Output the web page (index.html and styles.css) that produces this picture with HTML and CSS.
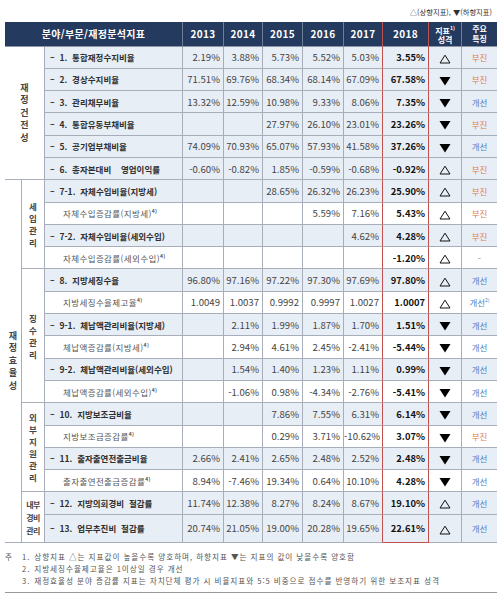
FILE: index.html
```html
<!DOCTYPE html>
<html lang="ko">
<head>
<meta charset="utf-8">
<title>재정분석지표</title>
<link rel="stylesheet" href="styles.css">
</head>
<body>
<div class="page">
  <div class="legend">△(상향지표), ▼(하향지표)</div>
  <table class="fin">
    <colgroup>
      <col class="w-cat1"><col class="w-cat2"><col class="w-label">
      <col class="w-41"><col class="w-39"><col class="w-40"><col class="w-41"><col class="w-39">
      <col class="w-46"><col class="w-33"><col class="w-35">
    </colgroup>
    <thead>
      <tr>
        <th colspan="3">분야/부문/재정분석지표</th>
        <th>2013</th><th>2014</th><th>2015</th><th>2016</th><th class="pre18">2017</th>
        <th class="y18">2018</th>
        <th class="sm">지표<sup>1)</sup><br>성격</th>
        <th class="sm last">주요<br>특징</th>
      </tr>
    </thead>
    <tbody>
      <tr class="main">
        <td class="cat sec" colspan="2" rowspan="6">재<br>정<br>건<br>전<br>성</td>
        <td class="lbl">– 1. 통합재정수지비율</td>
        <td>2.19%</td><td>3.88%</td><td>5.73%</td><td>5.52%</td><td class="pre18">5.03%</td><td class="y18">3.55%</td>
        <td class="ind"><svg class="tri" viewBox="0 0 12 10"><path d="M6 1.2L11 9H1z" fill="none" stroke="#111" stroke-width="1"/></svg></td><td class="st bad">부진</td>
      </tr>
      <tr class="main">
        <td class="lbl">– 2. 경상수지비율</td>
        <td>71.51%</td><td>69.76%</td><td>68.34%</td><td>68.14%</td><td class="pre18">67.09%</td><td class="y18">67.58%</td>
        <td class="ind"><svg class="tri" viewBox="0 0 12 10"><path d="M0.5 1h11L6 9.5z" fill="#000"/></svg></td><td class="st bad">부진</td>
      </tr>
      <tr class="main">
        <td class="lbl">– 3. 관리채무비율</td>
        <td>13.32%</td><td>12.59%</td><td>10.98%</td><td>9.33%</td><td class="pre18">8.06%</td><td class="y18">7.35%</td>
        <td class="ind"><svg class="tri" viewBox="0 0 12 10"><path d="M0.5 1h11L6 9.5z" fill="#000"/></svg></td><td class="st good">개선</td>
      </tr>
      <tr class="main">
        <td class="lbl">– 4. 통합유동부채비율</td>
        <td></td><td></td><td>27.97%</td><td>26.10%</td><td class="pre18">23.01%</td><td class="y18">23.26%</td>
        <td class="ind"><svg class="tri" viewBox="0 0 12 10"><path d="M0.5 1h11L6 9.5z" fill="#000"/></svg></td><td class="st bad">부진</td>
      </tr>
      <tr class="main">
        <td class="lbl">– 5. 공기업부채비율</td>
        <td>74.09%</td><td>70.93%</td><td>65.07%</td><td>57.93%</td><td class="pre18">41.58%</td><td class="y18">37.26%</td>
        <td class="ind"><svg class="tri" viewBox="0 0 12 10"><path d="M0.5 1h11L6 9.5z" fill="#000"/></svg></td><td class="st good">개선</td>
      </tr>
      <tr class="main sec">
        <td class="lbl">– 6. 총자본대비 &nbsp;영업이익률</td>
        <td>-0.60%</td><td>-0.82%</td><td>1.85%</td><td>-0.59%</td><td class="pre18">-0.68%</td><td class="y18">-0.92%</td>
        <td class="ind"><svg class="tri" viewBox="0 0 12 10"><path d="M6 1.2L11 9H1z" fill="none" stroke="#111" stroke-width="1"/></svg></td><td class="st bad">부진</td>
      </tr>

      <tr class="main">
        <td class="cat outer" rowspan="16">재<br>정<br>효<br>율<br>성</td>
        <td class="cat sub" rowspan="4">세<br>입<br>관<br>리</td>
        <td class="lbl">– 7-1. 자체수입비율(지방세)</td>
        <td></td><td></td><td>28.65%</td><td>26.32%</td><td class="pre18">26.23%</td><td class="y18">25.90%</td>
        <td class="ind"><svg class="tri" viewBox="0 0 12 10"><path d="M6 1.2L11 9H1z" fill="none" stroke="#111" stroke-width="1"/></svg></td><td class="st bad">부진</td>
      </tr>
      <tr>
        <td class="lbl subl">자체수입증감률(지방세)<sup>4)</sup></td>
        <td></td><td></td><td></td><td>5.59%</td><td class="pre18">7.16%</td><td class="y18">5.43%</td>
        <td class="ind"><svg class="tri" viewBox="0 0 12 10"><path d="M6 1.2L11 9H1z" fill="none" stroke="#111" stroke-width="1"/></svg></td><td class="st bad">부진</td>
      </tr>
      <tr class="main">
        <td class="lbl">– 7-2. 자체수입비율(세외수입)</td>
        <td></td><td></td><td></td><td></td><td class="pre18">4.62%</td><td class="y18">4.28%</td>
        <td class="ind"><svg class="tri" viewBox="0 0 12 10"><path d="M6 1.2L11 9H1z" fill="none" stroke="#111" stroke-width="1"/></svg></td><td class="st bad">부진</td>
      </tr>
      <tr>
        <td class="lbl subl">자체수입증감률(세외수입)<sup>4)</sup></td>
        <td></td><td></td><td></td><td></td><td class="pre18"></td><td class="y18">-1.20%</td>
        <td class="ind"><svg class="tri" viewBox="0 0 12 10"><path d="M6 1.2L11 9H1z" fill="none" stroke="#111" stroke-width="1"/></svg></td><td class="st dash">-</td>
      </tr>

      <tr class="main">
        <td class="cat sub" rowspan="6">징<br>수<br>관<br>리</td>
        <td class="lbl">– 8. 지방세징수율</td>
        <td>96.80%</td><td>97.16%</td><td>97.22%</td><td>97.30%</td><td class="pre18">97.69%</td><td class="y18">97.80%</td>
        <td class="ind"><svg class="tri" viewBox="0 0 12 10"><path d="M6 1.2L11 9H1z" fill="none" stroke="#111" stroke-width="1"/></svg></td><td class="st good">개선</td>
      </tr>
      <tr>
        <td class="lbl subl">지방세징수율제고율<sup>4)</sup></td>
        <td>1.0049</td><td>1.0037</td><td>0.9992</td><td>0.9997</td><td class="pre18">1.0027</td><td class="y18">1.0007</td>
        <td class="ind"><svg class="tri" viewBox="0 0 12 10"><path d="M6 1.2L11 9H1z" fill="none" stroke="#111" stroke-width="1"/></svg></td><td class="st good">개선<sup>2)</sup></td>
      </tr>
      <tr class="main">
        <td class="lbl">– 9-1. 체납액관리비율(지방세)</td>
        <td></td><td>2.11%</td><td>1.99%</td><td>1.87%</td><td class="pre18">1.70%</td><td class="y18">1.51%</td>
        <td class="ind"><svg class="tri" viewBox="0 0 12 10"><path d="M0.5 1h11L6 9.5z" fill="#000"/></svg></td><td class="st good">개선</td>
      </tr>
      <tr>
        <td class="lbl subl">체납액증감률(지방세)<sup>4)</sup></td>
        <td></td><td>2.94%</td><td>4.61%</td><td>2.45%</td><td class="pre18">-2.41%</td><td class="y18">-5.44%</td>
        <td class="ind"><svg class="tri" viewBox="0 0 12 10"><path d="M0.5 1h11L6 9.5z" fill="#000"/></svg></td><td class="st good">개선</td>
      </tr>
      <tr class="main">
        <td class="lbl">– 9-2. 체납액관리비율(세외수입)</td>
        <td></td><td>1.54%</td><td>1.40%</td><td>1.23%</td><td class="pre18">1.11%</td><td class="y18">0.99%</td>
        <td class="ind"><svg class="tri" viewBox="0 0 12 10"><path d="M0.5 1h11L6 9.5z" fill="#000"/></svg></td><td class="st good">개선</td>
      </tr>
      <tr>
        <td class="lbl subl">체납액증감률(세외수입)<sup>4)</sup></td>
        <td></td><td>-1.06%</td><td>0.98%</td><td>-4.34%</td><td class="pre18">-2.76%</td><td class="y18">-5.41%</td>
        <td class="ind"><svg class="tri" viewBox="0 0 12 10"><path d="M0.5 1h11L6 9.5z" fill="#000"/></svg></td><td class="st good">개선</td>
      </tr>

      <tr class="main">
        <td class="cat sub" rowspan="4">외<br>부<br>지<br>원<br>관<br>리</td>
        <td class="lbl">– 10. 지방보조금비율</td>
        <td></td><td></td><td>7.86%</td><td>7.55%</td><td class="pre18">6.31%</td><td class="y18">6.14%</td>
        <td class="ind"><svg class="tri" viewBox="0 0 12 10"><path d="M0.5 1h11L6 9.5z" fill="#000"/></svg></td><td class="st good">개선</td>
      </tr>
      <tr>
        <td class="lbl subl">지방보조금증감률<sup>4)</sup></td>
        <td></td><td></td><td>0.29%</td><td>3.71%</td><td class="pre18">-10.62%</td><td class="y18">3.07%</td>
        <td class="ind"><svg class="tri" viewBox="0 0 12 10"><path d="M0.5 1h11L6 9.5z" fill="#000"/></svg></td><td class="st bad">부진</td>
      </tr>
      <tr class="main">
        <td class="lbl">– 11. 출자출연전출금비율</td>
        <td>2.66%</td><td>2.41%</td><td>2.65%</td><td>2.48%</td><td class="pre18">2.52%</td><td class="y18">2.48%</td>
        <td class="ind"><svg class="tri" viewBox="0 0 12 10"><path d="M0.5 1h11L6 9.5z" fill="#000"/></svg></td><td class="st good">개선</td>
      </tr>
      <tr>
        <td class="lbl subl">출자출연전출금증감률<sup>4)</sup></td>
        <td>8.94%</td><td>-7.46%</td><td>19.34%</td><td>0.64%</td><td class="pre18">10.10%</td><td class="y18">4.28%</td>
        <td class="ind"><svg class="tri" viewBox="0 0 12 10"><path d="M0.5 1h11L6 9.5z" fill="#000"/></svg></td><td class="st good">개선</td>
      </tr>

      <tr class="main">
        <td class="cat sub two" rowspan="2">내부<br>경비<br>관리</td>
        <td class="lbl">– 12. 지방의회경비 절감률</td>
        <td>11.74%</td><td>12.38%</td><td>8.27%</td><td>8.24%</td><td class="pre18">8.67%</td><td class="y18">19.10%</td>
        <td class="ind"><svg class="tri" viewBox="0 0 12 10"><path d="M6 1.2L11 9H1z" fill="none" stroke="#111" stroke-width="1"/></svg></td><td class="st good">개선</td>
      </tr>
      <tr class="main tall">
        <td class="lbl">– 13. 업무추진비 절감률</td>
        <td>20.74%</td><td>21.05%</td><td>19.00%</td><td>20.28%</td><td class="pre18">19.65%</td><td class="y18 end">22.61%</td>
        <td class="ind"><svg class="tri" viewBox="0 0 12 10"><path d="M6 1.2L11 9H1z" fill="none" stroke="#111" stroke-width="1"/></svg></td><td class="st good">개선</td>
      </tr>
    </tbody>
  </table>
  <div class="notes">
    <span class="nh">주</span><span class="nt"><span class="nn">1.</span>상향지표 △는 지표값이 높을수록 양호하며, 하향지표 ▼는 지표의 값이 낮을수록 양호함</span>
    <span class="nh"></span><span class="nt"><span class="nn">2.</span>지방세징수율제고율은 1이상일 경우 개선</span>
    <span class="nh"></span><span class="nt"><span class="nn">3.</span>재정효율성 분야 증감률 지표는 자치단체 평가 시 비율지표와 5:5 비중으로 점수를 반영하기 위한 보조지표 성격</span>
  </div>
</div>
</body>
</html>
```

FILE: styles.css
```css
html, body {
  margin: 0;
  padding: 0;
  background: #ffffff;
}
body {
  font-family: "Noto Sans CJK KR", "Noto Sans", sans-serif;
  color: #333;
}
.page {
  width: 499px;
  padding: 0 2px 0 5px;
  box-sizing: border-box;
}
.legend {
  height: 22px;
  line-height: 25px;
  text-align: right;
  font-size: 7.3px;
  color: #333;
  padding-right: 5px;
}
.fin {
  width: 492px;
  table-layout: fixed;
  border-collapse: separate;
  border-spacing: 0;
}
.w-cat1 { width: 17px; }
.w-cat2 { width: 23px; }
.w-label { width: 138px; }
.w-41 { width: 41px; }
.w-39 { width: 39px; }
.w-40 { width: 40px; }
.w-46 { width: 46px; }
.w-33 { width: 33px; }
.w-35 { width: 35px; }

.fin thead tr { height: 24.5px; }
.fin th {
  background: #243a5e;
  color: #fff;
  font-weight: bold;
  font-size: 10px;
  padding: 0;
  text-align: center;
  border-right: 1px solid #6d7d96;
  border-bottom: 1px solid #8c96a6;
  letter-spacing: 0.3px;
}
.fin th.sm {
  font-size: 8px;
  line-height: 9.5px;
  letter-spacing: 0;
}
.fin th.last { border-right: none; }
.fin th sup {
  font-size: 5px;
  vertical-align: 4px;
}

.fin tbody tr { height: 22.3px; }
.fin tbody tr.tall { height: 28px; }
.fin td {
  padding: 0 3px 0 0;
  border-right: 1px solid #a7aeb9;
  border-bottom: 1px solid #a7aeb9;
  text-align: right;
  font-size: 9.6px;
  color: #454545;
  white-space: nowrap;
  overflow: visible;
}
.fin tr.main td { background: #e8eef6; }
.fin tr.main td.cat { background: #fff; }

.fin td.lbl {
  text-align: left;
  padding-left: 5px;
  font-size: 8.5px;
  font-weight: bold;
  color: #2f2f2f;
  word-spacing: 2.5px;
}
.fin td.lbl.subl {
  padding-left: 18px;
  font-weight: normal;
  color: #555;
  letter-spacing: 0.4px;
  word-spacing: 0;
}
.fin td.lbl sup {
  font-size: 5px;
  vertical-align: 4px;
  font-weight: bold;
}

.fin td.cat {
  text-align: center;
  padding: 0;
  font-size: 9px;
  font-weight: bold;
  color: #444;
  line-height: 12.5px;
  background: #fff;
}
.fin td.cat.sub {
  font-size: 8.5px;
  line-height: 12px;
}
.fin td.cat.two {
  font-size: 8px;
  line-height: 13px;
  letter-spacing: -0.5px;
}

.fin td.pre18 { border-right-color: #c0504d; }
.fin th.pre18 { border-right-color: #c0504d; }
.fin td.y18 {
  font-weight: bold;
  font-size: 9.4px;
  color: #111;
  border-right-color: #c0504d;
}
.fin th.y18 { border-right-color: #c0504d; }
.fin td.y18.end { border-bottom-color: #c0504d; }

.fin td.ind {
  text-align: center;
  padding: 0;
}
.tri {
  width: 12px;
  height: 10px;
  display: inline-block;
  vertical-align: middle;
}
.fin td.st {
  text-align: center;
  padding: 0;
  font-size: 8.5px;
  border-right: none;
}
.fin td.st sup {
  font-size: 5px;
  vertical-align: 4px;
}
.fin td.bad { color: #e2803a; }
.fin td.good { color: #4f7fc4; }
.fin td.dash { color: #888; }

.notes {
  display: grid;
  grid-template-columns: 17px 1fr;
  margin-top: 8px;
  padding-bottom: 5px;
  border-bottom: 1px solid #999;
  width: 492px;
  font-size: 7.6px;
  line-height: 12px;
  color: #555;
  letter-spacing: 0.95px;
}
.nh { padding-left: 0; }
.nn { margin-right: 4px; }
```
